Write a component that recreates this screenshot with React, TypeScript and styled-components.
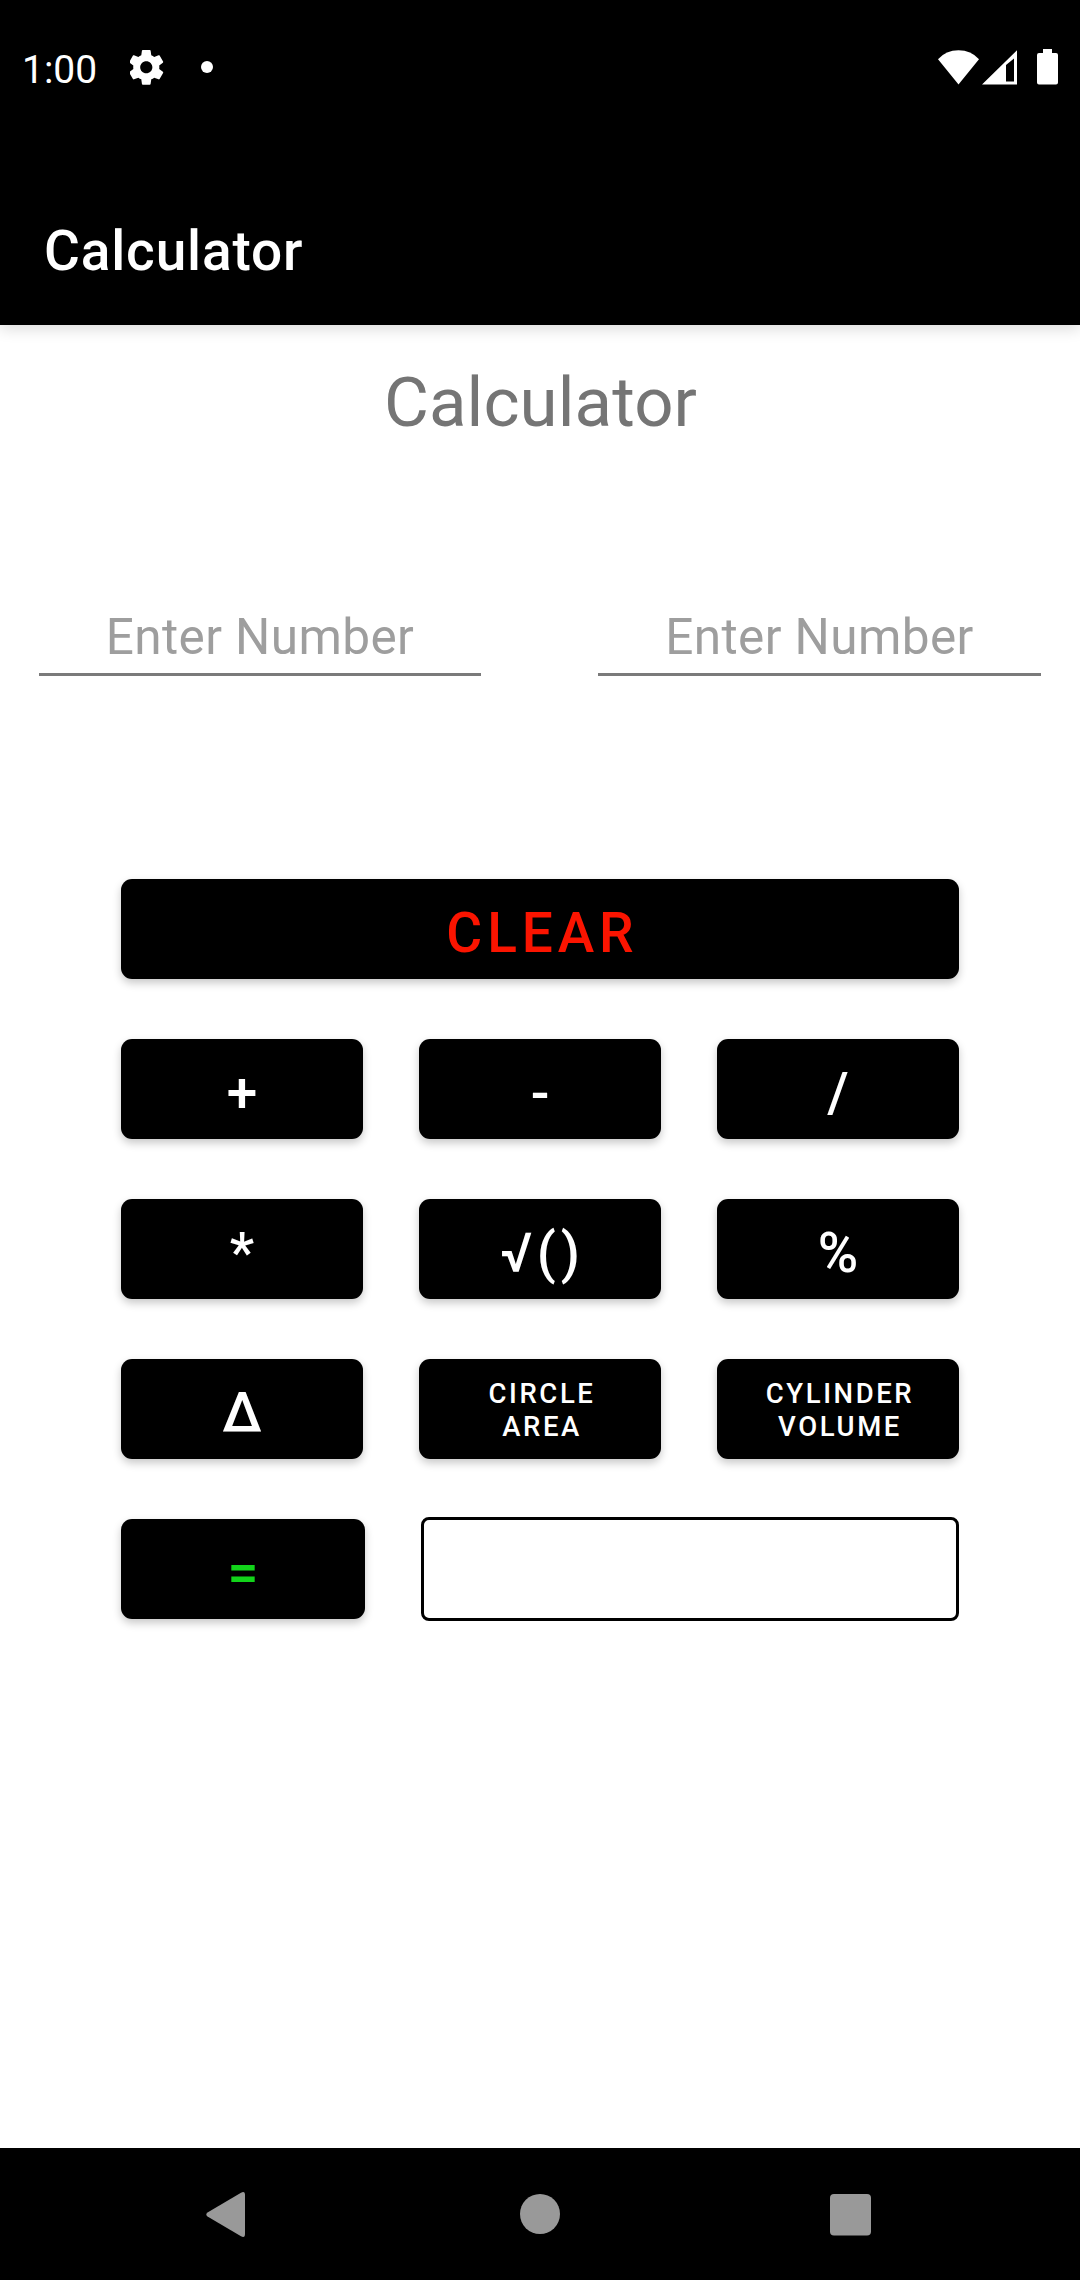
import React from 'react';
import styled, { createGlobalStyle } from 'styled-components';

const GlobalStyle = createGlobalStyle`
  * { box-sizing: border-box; }
  body {
    margin: 0;
    background: #fff;
    font-family: Roboto, 'Liberation Sans', sans-serif;
  }
`;

const Screen = styled.div`
  width: 1080px;
  height: 2280px;
  display: flex;
  flex-direction: column;
  background: #fff;
  overflow: hidden;
`;

const StatusBar = styled.header`
  height: 171px;
  flex: none;
  display: flex;
  justify-content: space-between;
  align-items: flex-start;
  padding: 46px 22px 0 22px;
  background: #000;
  color: #fff;
`;

const StatusGroup = styled.div`
  display: flex;
  align-items: flex-start;
`;

const Clock = styled.span`
  width: 108px;
  font-size: 39px;
  line-height: 48px;
`;

const Toolbar = styled.div`
  height: 154px;
  flex: none;
  display: flex;
  align-items: center;
  padding: 6px 44px 0;
  background: #000;
  color: #fff;
  font-size: 55px;
  font-weight: 500;
  letter-spacing: 0.85px;
  box-shadow: 0 4px 14px rgba(0, 0, 0, 0.14);
`;

const Content = styled.main`
  flex: 1;
  display: flex;
  flex-direction: column;
`;

const Title = styled.h1`
  margin: 37px 0 0;
  height: 82px;
  line-height: 82px;
  padding-left: 1px;
  text-align: center;
  font-size: 69px;
  font-weight: 400;
  letter-spacing: 0.08px;
  color: #757575;
`;

const Fields = styled.div`
  display: grid;
  grid-template-columns: 442px 443px;
  justify-content: space-between;
  margin-top: 163px;
  padding: 0 39px;
`;

const Field = styled.div`
  height: 69px;
  border-bottom: 3px solid #7a7a7a;
  text-align: center;
  font-size: 49.5px;
  line-height: 60px;
  letter-spacing: 0.4px;
  color: #9e9e9e;
`;

const Pad = styled.div`
  display: grid;
  grid-template-columns: repeat(3, 242px);
  grid-auto-rows: 100px;
  column-gap: 56px;
  row-gap: 60px;
  margin: 203px 121px 0;
`;

const Key = styled.button<{ $color?: string; $wide?: boolean; $small?: boolean }>`
  grid-column: ${p => (p.$wide ? '1 / -1' : 'auto')};
  display: flex;
  align-items: center;
  justify-content: center;
  border: 0;
  border-radius: 11px;
  padding: ${p => (p.$small ? '2px 0 0 4px' : '7px 0 0 5px')};
  background: #000;
  color: ${p => p.$color || '#fff'};
  font-family: inherit;
  font-size: ${p => (p.$small ? '27.5px' : '55px')};
  line-height: ${p => (p.$small ? '33px' : '64px')};
  font-weight: 500;
  letter-spacing: ${p => (p.$small ? '2.6px' : '4.9px')};
  white-space: pre-line;
  text-align: center;
  box-shadow: 0 4px 9px rgba(0, 0, 0, 0.22);
`;

const ResultRow = styled.div`
  display: grid;
  grid-template-columns: 244px 538px;
  column-gap: 56px;
  align-items: center;
  margin: 58px 121px 0;
`;

const EqualsKey = styled(Key)`
  height: 100px;
`;

const Result = styled.output`
  display: block;
  height: 104px;
  border: 3px solid #000;
  border-radius: 8px;
`;

const NavBar = styled.nav`
  height: 132px;
  flex: none;
  background: #000;
`;

const keys = ['+', '-', '/', '*', '√()', '%', 'Δ'];
const formulas = ['CIRCLE\nAREA', 'CYLINDER\nVOLUME'];

export default function App() {
  return (
    <>
      <GlobalStyle />
      <Screen>
        <StatusBar>
          <StatusGroup>
            <Clock>1:00</Clock>
            <svg width="100" height="46" viewBox="130 46 100 46" fill="#fff">
              <path
                transform="translate(125.4 46.4) scale(1.74)"
                d="M19.43 12.98c.04-.32.07-.64.07-.98s-.03-.66-.07-.98l2.11-1.65c.19-.15.24-.42.12-.64l-2-3.46c-.12-.22-.39-.3-.61-.22l-2.49 1c-.52-.4-1.08-.73-1.69-.98l-.38-2.65C14.46 2.18 14.25 2 14 2h-4c-.25 0-.46.18-.49.42l-.38 2.65c-.61.25-1.17.59-1.69.98l-2.49-1c-.23-.09-.49 0-.61.22l-2 3.46c-.13.22-.07.49.12.64l2.11 1.65c-.04.32-.07.65-.07.98s.03.66.07.98l-2.11 1.65c-.19.15-.24.42-.12.64l2 3.46c.12.22.39.3.61.22l2.49-1c.52.4 1.08.73 1.69.98l.38 2.65c.03.24.24.42.49.42h4c.25 0 .46-.18.49-.42l.38-2.65c.61-.25 1.17-.59 1.69-.98l2.49 1c.23.09.49 0 .61-.22l2-3.46c.12-.22.07-.49-.12-.64l-2.11-1.65zM12 15.5c-1.93 0-3.5-1.57-3.5-3.5s1.57-3.5 3.5-3.5 3.5 1.57 3.5 3.5-1.57 3.5-3.5 3.5z"
              />
              <circle cx="207" cy="67" r="6" />
            </svg>
          </StatusGroup>
          <svg width="124" height="46" viewBox="934 46 124 46" fill="#fff">
            <path d="M938 59.2Q946 50.3 958.5 50.3T979 59.2L958.5 84.5Z" />
            <path fillRule="evenodd" d="M982 84.5L1017 50.2V84.5ZM1006 65V81.5H1014V58.5Z" />
            <path d="M1043 49H1052V53H1056Q1058 53 1058 55V82.5Q1058 84.5 1056 84.5H1039Q1037 84.5 1037 82.5V55Q1037 53 1039 53H1043Z" />
          </svg>
        </StatusBar>
        <Toolbar>Calculator</Toolbar>
        <Content>
          <Title>Calculator</Title>
          <Fields>
            <Field>Enter Number</Field>
            <Field>Enter Number</Field>
          </Fields>
          <Pad>
            <Key $wide $color="#fb1400">CLEAR</Key>
            {keys.map(k => (
              <Key key={k}>{k}</Key>
            ))}
            {formulas.map(f => (
              <Key key={f} $small>{f}</Key>
            ))}
          </Pad>
          <ResultRow>
            <EqualsKey $color="#12d41a">=</EqualsKey>
            <Result />
          </ResultRow>
        </Content>
        <NavBar>
          <svg width="1080" height="132" viewBox="0 2148 1080 132" fill="#999">
            <path d="M207.5 2212.5L241 2192.7Q245 2190.5 245 2195V2234Q245 2238.5 241 2236.3L207.5 2216.5Q205 2214.5 207.5 2212.5Z" />
            <circle cx="540" cy="2214" r="20" />
            <rect x="830" y="2194" width="41" height="41.5" rx="4" />
          </svg>
        </NavBar>
      </Screen>
    </>
  );
}
